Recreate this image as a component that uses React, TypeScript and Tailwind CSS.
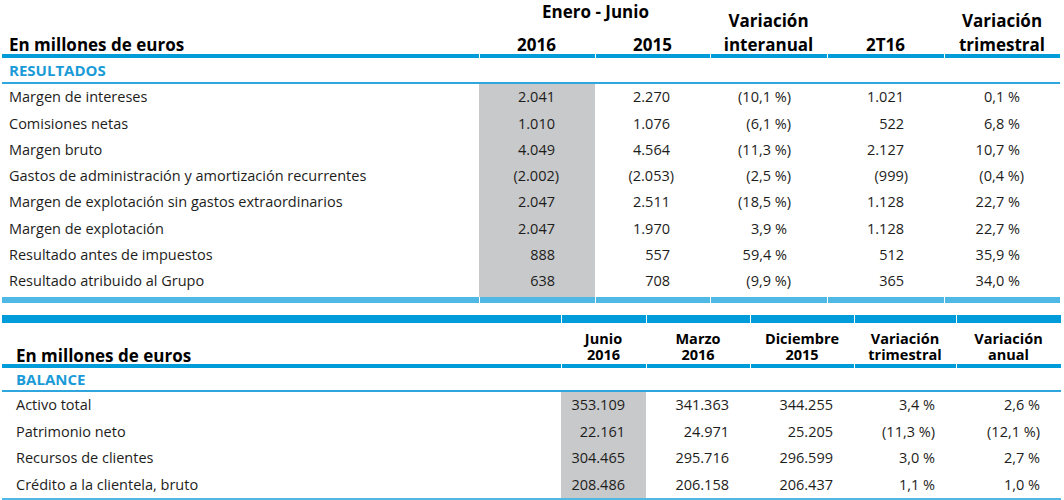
import React from "react"

const topCols = "grid grid-cols-[477px_116px_115px_117px_117px_116px]"
const botCols = "grid grid-cols-[559px_85px_104px_104px_102px_105px]"

const resultados = [
  ["Margen de intereses", "2.041", "2.270", "(10,1 %)", "1.021", "0,1 %"],
  ["Comisiones netas", "1.010", "1.076", "(6,1 %)", "522", "6,8 %"],
  ["Margen bruto", "4.049", "4.564", "(11,3 %)", "2.127", "10,7 %"],
  ["Gastos de administración y amortización recurrentes", "(2.002)", "(2.053)", "(2,5 %)", "(999)", "(0,4 %)"],
  ["Margen de explotación sin gastos extraordinarios", "2.047", "2.511", "(18,5 %)", "1.128", "22,7 %"],
  ["Margen de explotación", "2.047", "1.970", "3,9 %", "1.128", "22,7 %"],
  ["Resultado antes de impuestos", "888", "557", "59,4 %", "512", "35,9 %"],
  ["Resultado atribuido al Grupo", "638", "708", "(9,9 %)", "365", "34,0 %"],
]

const balance = [
  ["Activo total", "353.109", "341.363", "344.255", "3,4 %", "2,6 %"],
  ["Patrimonio neto", "22.161", "24.971", "25.205", "(11,3 %)", "(12,1 %)"],
  ["Recursos de clientes", "304.465", "295.716", "296.599", "3,0 %", "2,7 %"],
  ["Crédito a la clientela, bruto", "208.486", "206.158", "206.437", "1,1 %", "1,0 %"],
]

const balanceHeads = [
  "Junio\n2016",
  "Marzo\n2016",
  "Diciembre\n2015",
  "Variación\ntrimestral",
  "Variación\nanual",
]

// segmented rule: white 1px slivers at the column joins
function Rule({ cols, className }: { cols: string; className: string }) {
  return (
    <div className={cols}>
      {[0, 1, 2, 3, 4, 5].map((i) => (
        <div key={i} className={`${className} ${i > 0 ? "border-l border-white" : ""}`} />
      ))}
    </div>
  )
}

export default function App() {
  return (
    <div className="w-[1064px] h-[500px] overflow-hidden bg-white font-['Open_Sans',sans-serif] text-[#1d1d1b]">
      <div className="ml-[2px] w-[1058px]">
        {/* header */}
        <div className={`${topCols} grid-rows-[24px_30px] h-[54px] font-bold text-[17px] text-black`}>
          <div className="row-span-2 self-end pl-[7px] leading-[24px] -mb-[3px]">En millones de euros</div>
          <div className="col-span-2 text-center leading-[24px] pl-[2px]">Enero - Junio</div>
          <div className="col-start-4 row-start-1 row-span-2 self-end text-center leading-[24px] -mb-[3px] whitespace-pre-line">
            {"Variación\ninteranual"}
          </div>
          <div className="col-start-5 row-start-1 row-span-2 self-end text-right pr-[39px] leading-[24px] -mb-[3px]">2T16</div>
          <div className="col-start-6 row-start-1 row-span-2 self-end text-center leading-[24px] -mb-[3px] whitespace-pre-line">
            {"Variación\ntrimestral"}
          </div>
          <div className="col-start-2 row-start-2 self-end text-right pr-[39px] leading-[24px] -mb-[3px]">2016</div>
          <div className="col-start-3 row-start-2 self-end text-right pr-[38px] leading-[24px] -mb-[3px]">2015</div>
        </div>
        <Rule cols={topCols} className="h-[4px] bg-[#009bd9]" />
        <div className="h-[24px] flex items-center pl-[7px] font-bold text-[15px] text-[#1a9bd7]">RESULTADOS</div>
        <div className="h-[2px] bg-[#2fa6de]" />
        <div className="flex flex-col text-[14.5px]">
          {resultados.map((r) => (
            <div key={r[0]} className={`${topCols} h-[26.3px]`}>
              <div className="flex items-center pl-[7px]">{r[0]}</div>
              {r.slice(1).map((v, i) => (
                <div
                  key={i}
                  className={`flex items-center justify-end ${v.endsWith(")") ? "pr-[36px]" : "pr-[40px]"} ${i === 0 ? "bg-[#c8c9cb]" : ""}`}
                >
                  {v}
                </div>
              ))}
            </div>
          ))}
          <div className={`${topCols} h-[2.6px]`}>
            <div />
            <div className="bg-[#c8c9cb]" />
          </div>
        </div>
        <Rule cols={topCols} className="h-[6px] bg-[#50b8e5]" />
      </div>

      <div className="ml-[2px] mt-[12px] w-[1059px]">
        <Rule cols={botCols} className="h-[8px] bg-[#009bd9]" />
        <div className={`${botCols} h-[41px] font-bold text-[14.5px] leading-[16.5px] text-black`}>
          <div className="self-end pl-[14px] text-[17px] leading-[16px]">En millones de euros</div>
          {balanceHeads.map((h) => (
            <div key={h} className="self-end text-center whitespace-pre-line">
              {h}
            </div>
          ))}
        </div>
        <Rule cols={botCols} className="h-[4px] bg-[#009bd9]" />
        <div className="h-[22px] flex items-center pl-[14px] font-bold text-[15px] text-[#1a9bd7]">BALANCE</div>
        <div className="h-[2px] bg-[#2fa6de]" />
        <div className="flex flex-col text-[14.5px]">
          {balance.map((r) => (
            <div key={r[0]} className={`${botCols} h-[26.5px]`}>
              <div className="flex items-center pl-[14px]">{r[0]}</div>
              {r.slice(1).map((v, i) => (
                <div key={i} className={`flex items-center justify-end pr-[21px] ${i === 0 ? "bg-[#c8c9cb]" : ""}`}>
                  {v}
                </div>
              ))}
            </div>
          ))}
        </div>
        <div className="h-[2px] bg-[#50b8e5]" />
      </div>
    </div>
  )
}
